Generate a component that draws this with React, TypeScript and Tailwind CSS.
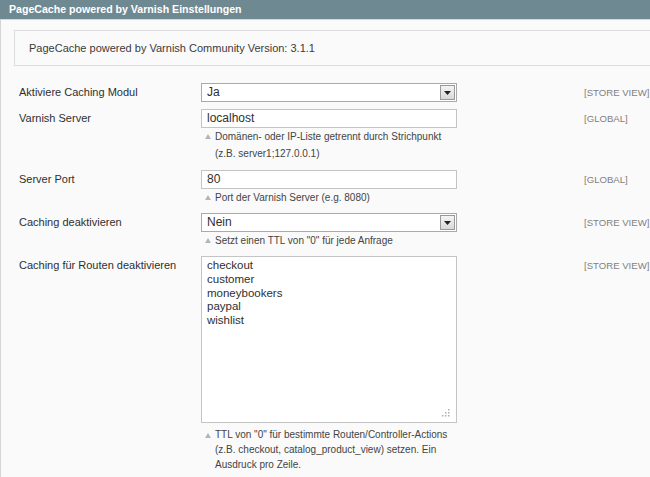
import React from 'react';

const Note: React.FC<{ children: React.ReactNode; leading?: string }> = ({ children, leading }) => (
  <div className={`relative pl-[14px] text-[10px] text-[#444] ${leading ?? 'leading-[17px]'}`}>
    <svg className="absolute left-[4px] top-[6px]" width="6" height="5" viewBox="0 0 6 5">
      <path d="M3 0 L6 5 L0 5 Z" fill="#b5b5b5" />
    </svg>
    {children}
  </div>
);

const SelectBox: React.FC<{ value: string }> = ({ value }) => (
  <div className="relative h-[19px] w-[256px] border border-[#aaa] bg-white pl-[5px] text-[12px] leading-[17px] text-[#2f2f2f]">
    {value}
    <div className="absolute right-[1px] top-[1px] flex h-[15px] w-[15px] items-center justify-center border border-[#999] bg-gradient-to-b from-[#f4f4f4] to-[#d9d9d9]">
      <svg width="7" height="4" viewBox="0 0 7 4">
        <path d="M0 0 L7 0 L3.5 4 Z" fill="#222" />
      </svg>
    </div>
  </div>
);

const TextInput: React.FC<{ value: string }> = ({ value }) => (
  <div className="h-[19px] w-[256px] border border-[#c4c4c4] bg-white pl-[5px] text-[12px] leading-[17px] text-[#2f2f2f]">
    {value}
  </div>
);

const Row: React.FC<{
  label: string;
  scope: string;
  children: React.ReactNode;
  className?: string;
}> = ({ label, scope, children, className }) => (
  <div className={`grid grid-cols-[182px_256px_127px_1fr] ${className ?? ''}`}>
    <div className="pt-[2px] text-[11px] leading-[15px] text-[#2f2f2f]">{label}</div>
    <div>{children}</div>
    <div />
    <div className="whitespace-nowrap pt-[2px] text-[9.6px] leading-[15px] text-[#7f7f7f]">{scope}</div>
  </div>
);

export default function App() {
  const routes = ['checkout', 'customer', 'moneybookers', 'paypal', 'wishlist'];

  return (
    <div
      className="h-[477px] w-[650px] overflow-hidden bg-[#fafafa]"
      style={{ fontFamily: '"Liberation Sans", Arial, sans-serif' }}
    >
      {/* Header */}
      <div className="h-[20px] border-b border-[#c9dde2] bg-[#6f8992] pl-[9px] text-[10.6px] font-bold leading-[19px] text-white">
        PageCache powered by Varnish Einstellungen
      </div>

      {/* Content */}
      <div className="h-full border-l border-[#d4d4d4] pl-[13px] pt-[10px]">
        <div className="mr-[-20px] flex h-[36px] items-center border border-[#dcdcdc] bg-[#fafafa] pl-[14px] text-[11px] text-[#3a3a3a]">
          PageCache powered by Varnish Community Version: 3.1.1
        </div>

        <div className="ml-[5px] mt-[17px]">
          <Row label="Aktiviere Caching Modul" scope="[STORE VIEW]" className="mb-[7px]">
            <SelectBox value="Ja" />
          </Row>

          <Row label="Varnish Server" scope="[GLOBAL]" className="mb-[8px]">
            <TextInput value="localhost" />
            <Note>
              Domänen- oder IP-Liste getrennt durch Strichpunkt
              <br />
              (z.B. server1;127.0.0.1)
            </Note>
          </Row>

          <Row label="Server Port" scope="[GLOBAL]" className="mb-[7px]">
            <TextInput value="80" />
            <Note>Port der Varnish Server (e.g. 8080)</Note>
          </Row>

          <Row label="Caching deaktivieren" scope="[STORE VIEW]" className="mb-[7px]">
            <SelectBox value="Nein" />
            <Note>Setzt einen TTL von "0" für jede Anfrage</Note>
          </Row>

          <Row label="Caching für Routen deaktivieren" scope="[STORE VIEW]">
            <div className="relative h-[167px] w-[256px] border border-[#c4c4c4] bg-white pl-[5px] pt-[2px] text-[11.5px] leading-[13.8px] text-[#2f2f2f]">
              {routes.map((r) => (
                <div key={r}>{r}</div>
              ))}
              <svg className="absolute bottom-[5px] right-[6px]" width="8" height="8" viewBox="0 0 8 8">
                <g fill="#b0b0b0">
                  <rect x="6" y="0" width="1.5" height="1.5" />
                  <rect x="3" y="3" width="1.5" height="1.5" />
                  <rect x="6" y="3" width="1.5" height="1.5" />
                  <rect x="0" y="6" width="1.5" height="1.5" />
                  <rect x="3" y="6" width="1.5" height="1.5" />
                  <rect x="6" y="6" width="1.5" height="1.5" />
                </g>
              </svg>
            </div>
            <div className="pt-[4px]">
              <Note leading="leading-[15px]">
                TTL von "0" für bestimmte Routen/Controller-Actions
                <br />
                (z.B. checkout, catalog_product_view) setzen. Ein
                <br />
                Ausdruck pro Zeile.
              </Note>
            </div>
          </Row>
        </div>
      </div>
    </div>
  );
}
